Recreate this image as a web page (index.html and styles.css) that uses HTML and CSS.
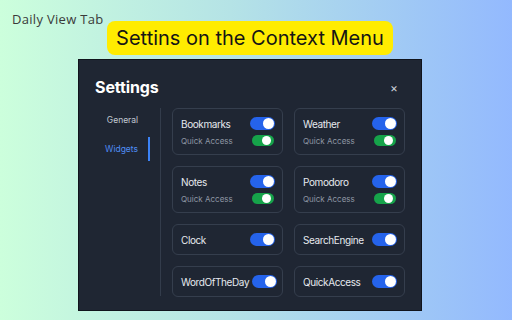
FILE: index.html
```html
<!DOCTYPE html>
<html lang="en">
<head>
  <meta charset="UTF-8">
  <meta name="viewport" content="width=device-width, initial-scale=1">
  <title>Daily View Tab</title>
  <link rel="stylesheet" href="styles.css">
</head>
<body>

<header class="top">
  <div class="brand">Daily View Tab</div>
  <div class="banner">Settins on the Context Menu</div>
</header>

<div class="panel">
  <div class="panel-head">
    <h2>Settings</h2>
    <span class="close">&times;</span>
  </div>

  <div class="panel-body">
    <nav class="sidebar">
      <div class="tab">General</div>
      <div class="tab active">Widgets</div>
    </nav>

    <div class="grid">
      <div class="card">
        <div class="row"><span class="label">Bookmarks</span><span class="toggle"></span></div>
        <div class="row"><span class="sub">Quick Access</span><span class="toggle small"></span></div>
      </div>
      <div class="card">
        <div class="row"><span class="label">Weather</span><span class="toggle"></span></div>
        <div class="row"><span class="sub">Quick Access</span><span class="toggle small"></span></div>
      </div>
      <div class="card">
        <div class="row"><span class="label">Notes</span><span class="toggle"></span></div>
        <div class="row"><span class="sub">Quick Access</span><span class="toggle small"></span></div>
      </div>
      <div class="card">
        <div class="row"><span class="label">Pomodoro</span><span class="toggle"></span></div>
        <div class="row"><span class="sub">Quick Access</span><span class="toggle small"></span></div>
      </div>
      <div class="card">
        <div class="row"><span class="label">Clock</span><span class="toggle"></span></div>
      </div>
      <div class="card">
        <div class="row"><span class="label">SearchEngine</span><span class="toggle"></span></div>
      </div>
      <div class="card">
        <div class="row"><span class="label">WordOfTheDay</span><span class="toggle"></span></div>
      </div>
      <div class="card">
        <div class="row"><span class="label">QuickAccess</span><span class="toggle"></span></div>
      </div>
    </div>
  </div>
</div>

</body>
</html>
```

FILE: styles.css
```css
/* Base */
body {
  font-family: Inter, 'Noto Sans', sans-serif;
  margin: 0;
  width: 512px;
  height: 320px;
  overflow: hidden;
  background: linear-gradient(90deg, #ccffdc 0%, #b5e3e6 45%, #93b9fe 100%);
  color: #333;
}

.top {
  display: flex;
  align-items: flex-start;
  gap: 6px;
  padding: 13px 0 0 12px;
}

.brand {
  width: 89px;
  font-family: 'Open Sans', sans-serif;
  font-size: 13px;
  letter-spacing: 0.3px;
  line-height: 12px;
  color: #3a3a3a;
  white-space: nowrap;
}

.banner {
  margin-top: 8px;
  width: 286px;
  height: 34px;
  background: #ffec00;
  border-radius: 8px;
  display: flex;
  align-items: center;
  justify-content: center;
  font-size: 20px;
  color: #151515;
}

/* Settings panel */
.panel {
  margin: 4px 0 0 78px;
  width: 344px;
  height: 252px;
  box-sizing: border-box;
  background: #1f2633;
  border: 1px solid #10141c;
  padding: 17px 16px 15px 16px;
}

.panel-head {
  display: flex;
  align-items: center;
  justify-content: space-between;
  height: 20px;
  margin-bottom: 11px;
}

.panel-head h2 {
  margin: 0;
  font-size: 16px;
  letter-spacing: -0.1px;
  font-weight: 700;
  color: #ffffff;
}

.close {
  color: #c9ced6;
  font-size: 12px;
  margin-right: 7px;
}

.panel-body {
  display: flex;
}

.sidebar {
  width: 55px;
  padding-right: 10px;
  border-right: 1px solid #333c4b;
  display: flex;
  flex-direction: column;
  gap: 5px;
  height: 188px;
}

.tab {
  height: 24px;
  line-height: 24px;
  text-align: center;
  font-size: 8.5px;
  color: #c2c8d2;
}

.tab.active {
  color: #4f8df5;
  border-right: 2px solid #3b82f6;
}

.grid {
  margin-left: 11px;
  display: grid;
  grid-template-columns: 111px 111px;
  gap: 11px;
  align-content: start;
}

.card {
  border: 1px solid #353e4d;
  border-radius: 6px;
  padding: 8px 7px 8px 8px;
  display: flex;
  flex-direction: column;
  gap: 5px;
}

.row {
  display: flex;
  align-items: center;
  justify-content: space-between;
  gap: 3px;
}

.label {
  font-size: 10px;
  letter-spacing: -0.4px;
  color: #e6e9ee;
  white-space: nowrap;
}

.sub {
  font-size: 8px;
  color: #8f97a4;
}

.toggle {
  position: relative;
  flex-shrink: 0;
  width: 25px;
  height: 13px;
  border-radius: 7px;
  background: #2563eb;
}

.toggle::after {
  content: '';
  position: absolute;
  right: 1px;
  top: 1px;
  width: 11px;
  height: 11px;
  border-radius: 50%;
  background: #ffffff;
}

.toggle.small {
  width: 22px;
  height: 11px;
  background: #16a34a;
  margin-right: 1px;
}

.toggle.small::after {
  width: 9px;
  height: 9px;
  right: 3px;
}
```
